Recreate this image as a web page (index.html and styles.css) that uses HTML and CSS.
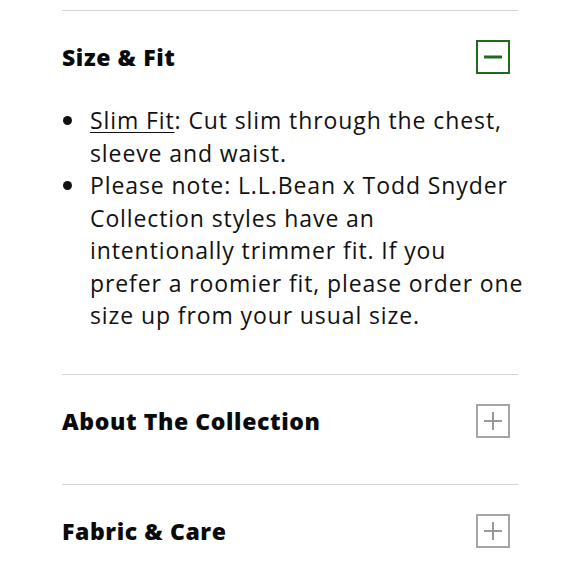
FILE: index.html
```html
<!DOCTYPE html>
<html>
<head>
<meta charset="utf-8">
<link rel="stylesheet" href="styles.css">
</head>
<body>
<div class="accordion">
  <section class="panel open">
    <div class="panel-head">
      <h2 class="panel-title">Size &amp; Fit</h2>
      <span class="toggle toggle-minus"><svg width="18" height="4" viewBox="0 0 18 4"><rect x="0" y="0.5" width="18" height="3" fill="#1e6b1e"/></svg></span>
    </div>
    <ul class="panel-body">
      <li><span class="u">Slim Fit</span>: Cut slim through the chest, sleeve and waist.</li>
      <li>Please note: L.L.Bean x Todd Snyder<br>Collection styles have an<br>intentionally trimmer fit. If you<br>prefer a roomier fit, please order one<br>size up from your usual size.</li>
    </ul>
  </section>
  <section class="panel">
    <div class="panel-head">
      <h2 class="panel-title">About The Collection</h2>
      <span class="toggle toggle-plus"><svg width="18" height="18" viewBox="0 0 18 18"><rect x="0" y="8" width="18" height="2" fill="#999"/><rect x="8" y="0" width="2" height="18" fill="#999"/></svg></span>
    </div>
  </section>
  <section class="panel">
    <div class="panel-head">
      <h2 class="panel-title">Fabric &amp; Care</h2>
      <span class="toggle toggle-plus"><svg width="18" height="18" viewBox="0 0 18 18"><rect x="0" y="8" width="18" height="2" fill="#999"/><rect x="8" y="0" width="2" height="18" fill="#999"/></svg></span>
    </div>
  </section>
</div>
</body>
</html>
```
FILE: styles.css
```css
html, body {
  margin: 0;
  padding: 0;
  background: #fff;
}
body {
  font-family: "Open Sans", "DejaVu Sans", sans-serif;
  color: #111;
}
.accordion {
  margin: 10px 62px 0 62px;
  width: 456px;
}
.panel {
  border-top: 1.5px solid #d4d4d4;
  padding-bottom: 46px;
}
.panel.open {
  padding-bottom: 0;
}
.panel-head {
  display: flex;
  align-items: center;
  justify-content: space-between;
  padding: 29px 8px 0 0;
}
.panel-title {
  margin: 0;
  font-size: 23px;
  font-weight: 800;
  letter-spacing: 0.6px;
  color: #0a0a0a;
}
.toggle {
  width: 34px;
  height: 34px;
  box-sizing: border-box;
  display: flex;
  align-items: center;
  justify-content: center;
}
.toggle-minus {
  border: 2px solid #1e6b1e;
}
.toggle-plus {
  border: 2px solid #a6a6a6;
}
.panel-body {
  list-style: none;
  margin: 0 -14px 0 0;
  padding: 30px 0 42px 0;
  font-size: 23px;
  line-height: 32.5px;
  letter-spacing: 0.9px;
}
.panel-body li {
  position: relative;
  padding-left: 28px;
}
.panel-body li::before {
  content: "";
  position: absolute;
  left: 1px;
  top: 12px;
  width: 9px;
  height: 9px;
  border-radius: 50%;
  background: #111;
}
.u {
  text-decoration: underline;
  text-underline-offset: 3px;
  text-decoration-thickness: 1px;
}
```
